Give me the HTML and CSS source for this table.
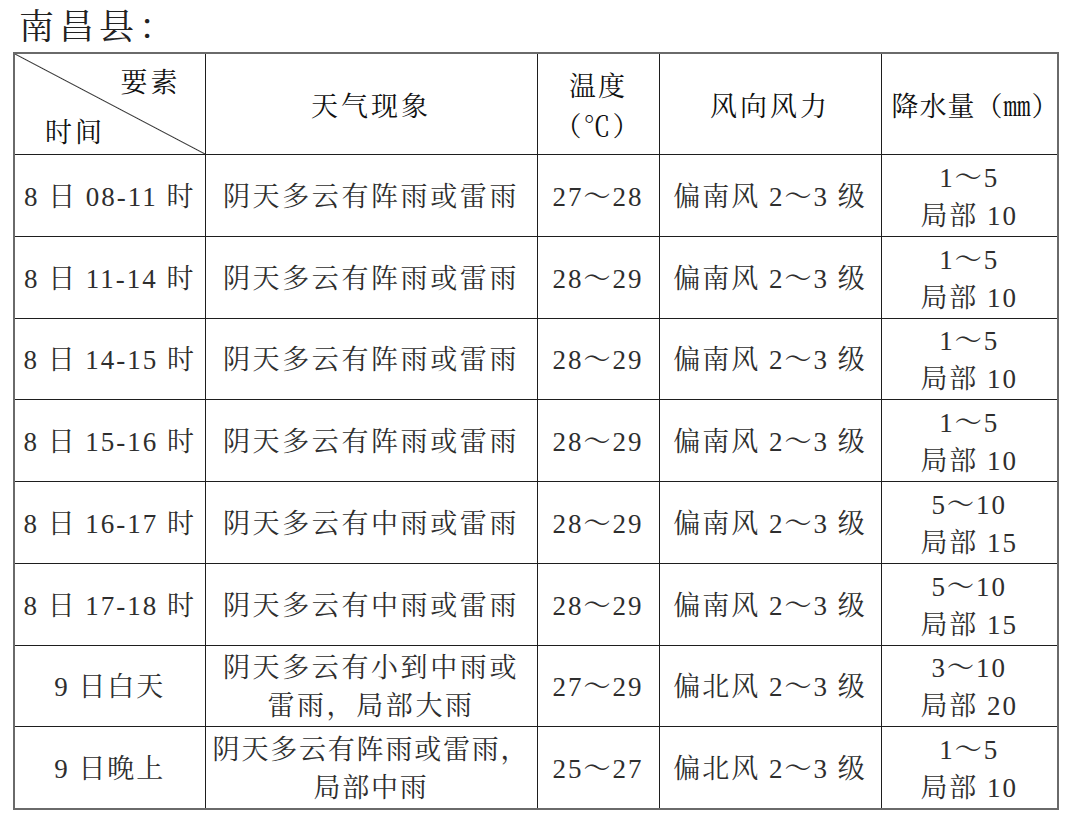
FILE: index.html
```html
<!DOCTYPE html>
<html lang="zh-CN">
<head>
<meta charset="utf-8">
<link rel="stylesheet" href="styles.css">
</head>
<body>
<div class="page">
  <h1 class="title">南昌县：</h1>
  <table class="fc">
    <colgroup>
      <col class="c1"><col class="c2"><col class="c3"><col class="c4"><col class="c5">
    </colgroup>
    <thead>
      <tr>
        <th class="diag">
          <div class="d-top">要素</div>
          <div class="d-bot">时间</div>
        </th>
        <th>天气现象</th>
        <th class="two">温度<br>（℃）</th>
        <th>风向风力</th>
        <th class="rain">降水量（㎜）</th>
      </tr>
    </thead>
    <tbody>
      <tr><td>8 日 08-11 时</td><td>阴天多云有阵雨或雷雨</td><td>27～28</td><td>偏南风 2～3 级</td><td class="ml">1～5<br>局部 10</td></tr>
      <tr><td>8 日 11-14 时</td><td>阴天多云有阵雨或雷雨</td><td>28～29</td><td>偏南风 2～3 级</td><td class="ml">1～5<br>局部 10</td></tr>
      <tr><td>8 日 14-15 时</td><td>阴天多云有阵雨或雷雨</td><td>28～29</td><td>偏南风 2～3 级</td><td class="ml">1～5<br>局部 10</td></tr>
      <tr><td>8 日 15-16 时</td><td>阴天多云有阵雨或雷雨</td><td>28～29</td><td>偏南风 2～3 级</td><td class="ml">1～5<br>局部 10</td></tr>
      <tr><td>8 日 16-17 时</td><td>阴天多云有中雨或雷雨</td><td>28～29</td><td>偏南风 2～3 级</td><td class="ml">5～10<br>局部 15</td></tr>
      <tr><td>8 日 17-18 时</td><td>阴天多云有中雨或雷雨</td><td>28～29</td><td>偏南风 2～3 级</td><td class="ml">5～10<br>局部 15</td></tr>
      <tr><td>9 日白天</td><td class="ml">阴天多云有小到中雨或<br>雷雨，局部大雨</td><td>27～29</td><td>偏北风 2～3 级</td><td class="ml">3～10<br>局部 20</td></tr>
      <tr><td>9 日晚上</td><td class="ml wide">阴天多云有阵雨或雷雨，<br>局部中雨</td><td>25～27</td><td>偏北风 2～3 级</td><td class="ml">1～5<br>局部 10</td></tr>
    </tbody>
  </table>
</div>
</body>
</html>
```

FILE: styles.css
```css
html, body {
  margin: 0;
  padding: 0;
  background: #ffffff;
}

body {
  font-family: "Liberation Serif", "Noto Serif CJK SC", "Noto Sans CJK SC", serif;
  color: #2e2e2e;
}

.page {
  padding: 6px 0 0 13px;
}

.title {
  margin: 0 0 2px 6px;
  font-size: 35px;
  font-weight: normal;
  letter-spacing: 5px;
  line-height: 44px;
  height: 44px;
  color: #222;
}

.fc {
  border-collapse: collapse;
  table-layout: fixed;
  width: 1045px;
  border: 2px solid #6a6a6a;
}

.c1 { width: 191px; }
.c2 { width: 332px; }
.c3 { width: 122px; }
.c4 { width: 222px; }
.c5 { width: 177px; }

.fc th,
.fc td {
  border: 1.5px solid #1e1e1e;
  padding: 0;
  text-align: center;
  vertical-align: middle;
  white-space: nowrap;
  font-size: 27px;
}

.fc th {
  height: 95px;
  padding-top: 5px;
  font-weight: normal;
  color: #111;
  letter-spacing: 3px;
  line-height: 40px;
}

.fc td {
  height: 77.75px;
  padding-top: 3px;
  letter-spacing: 2px;
  line-height: 38px;
}

.fc td:nth-child(2) {
  letter-spacing: 2.6px;
}

.fc th.rain {
  letter-spacing: 1px;
  font-size: 27px;
  text-align: left;
  padding-left: 10px;
}

.fc th.two {
  line-height: 40px;
  letter-spacing: 2px;
}

.fc td.wide {
  letter-spacing: 1.8px;
}

.fc th.diag {
  background: linear-gradient(to top right,
    transparent calc(50% - 1px),
    #333 50%,
    transparent calc(50% + 1px));
  text-align: left;
  line-height: 32px;
  padding-top: 0;
  height: 100px;
}

.d-top {
  text-align: right;
  padding-right: 24px;
  margin-bottom: 18px;
  margin-top: 8px;
}

.d-bot {
  padding-left: 30px;
}
```
